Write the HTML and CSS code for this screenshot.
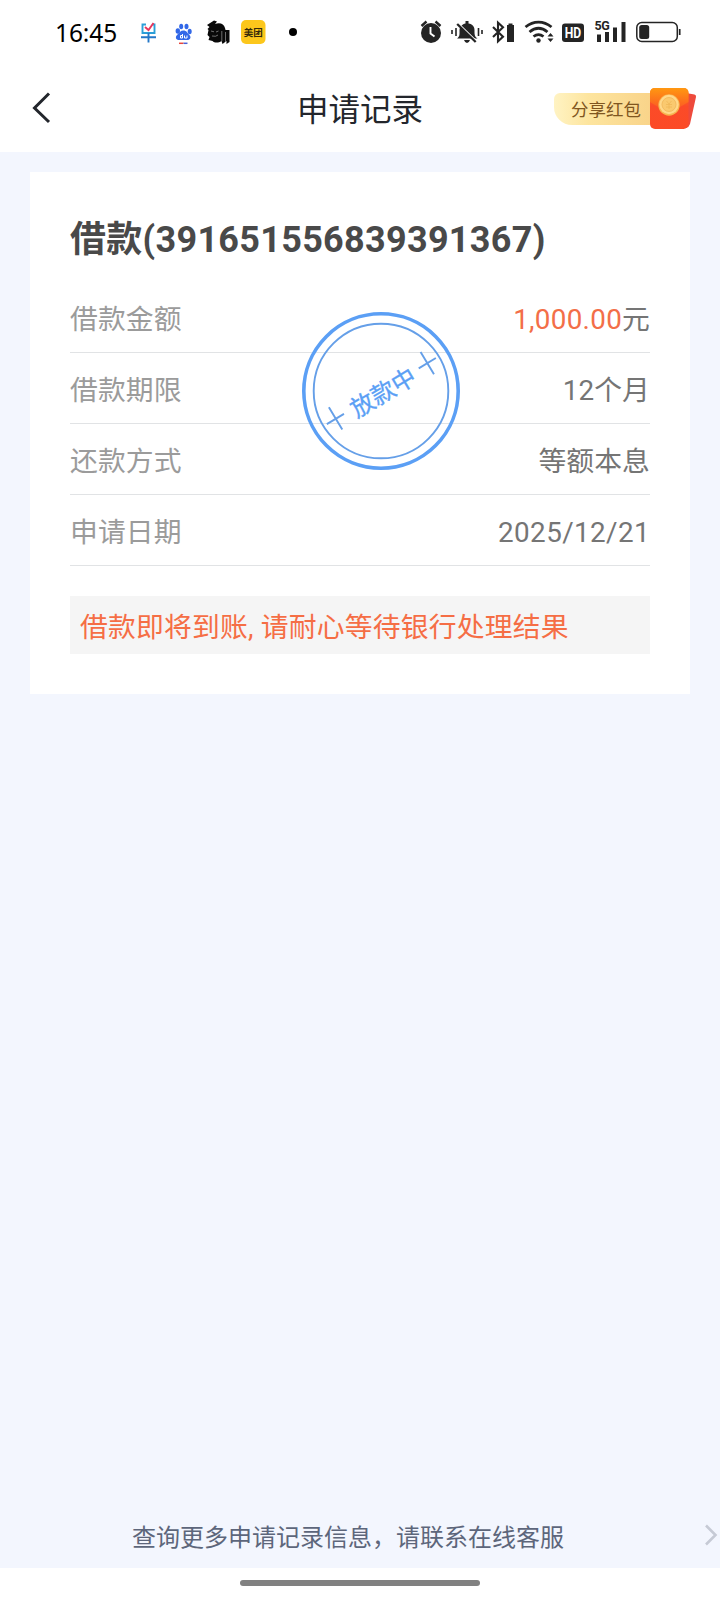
FILE: index.html
```html
<!DOCTYPE html>
<html lang="zh-CN">
<head>
<meta charset="utf-8">
<title>申请记录</title>
<link rel="stylesheet" href="styles.css">
</head>
<body>
<div class="screen">
  <div class="status">
    <span class="clock">16:45</span>
    <svg class="apps" width="170" height="64" viewBox="130 0 170 64">
      <g fill="none" stroke-width="1.900">
        <path d="M146 24.500h-3.500v8.500h12v-8.500h-2" stroke="#2b9fd8"/>
        <path d="M141 37.300h15M148.500 33v9.500" stroke="#2478c8"/>
        <path d="M145 27l3.500 3 5-7" stroke="#e8365d"/>
      </g>
      <g fill="#3268e8">
        <ellipse cx="177.800" cy="31" rx="2.200" ry="2.800"/><ellipse cx="181.200" cy="26.500" rx="2" ry="2.800"/>
        <ellipse cx="186.500" cy="26.500" rx="2" ry="2.800"/><ellipse cx="189.700" cy="31.500" rx="2" ry="2.800"/>
        <path d="M183.500 30.500c3 0 3.500 2.300 5.500 4 3 2.800 1 5.700-2 5.500h-7c-4 .5-5.500-3-2.500-5.500 2-2 3-4 6-4z"/>
      </g>
      <path d="M182.500 34v4h-2v-2.500h2M184.500 35.500v2.500h2.500v-2.500" fill="none" stroke="#fff"/>
      <path d="M179 43.300h4.500" stroke="#e8463c" stroke-width="1.500"/><path d="M183.500 43.300h4" stroke="#4a62d8" stroke-width="1.500"/>
      <path d="M207 25l7-4.500 3 1-2 2.500c5-2 9 0 10 4l.5 2h4v12l-3 2v-3l-4 3-1-3c-3 2-7 2-9 0l-4-1 1-3-2-2 1-5-1-1 2-2z" fill="#090909"/>
      <path d="M211 31l3 .8M216 32l2.500-1M212 36q4 1 6-1M221.800 31v10M225.500 32v10" stroke="#999" stroke-width=".7" fill="none"/>
      <rect x="241" y="20" width="24.500" height="24" rx="5" fill="#fcc71c"/>
      <text x="253.200" y="35.600" class="meituan">美团</text>
      <circle cx="293" cy="32" r="4" fill="#000"/>
    </svg>
    <svg class="signals" width="270" height="64" viewBox="415 0 270 64">
      <g fill="#242424">
        <circle cx="431" cy="33" r="10"/>
        <path d="M421.500 26l5-4.500M435.500 21.500l5 4.500" stroke="#242424" stroke-width="2.400"/>
        <path d="M430.500 27v6.500l4 3" fill="none" stroke="#fff" stroke-width="1.900"/>
        <path d="M457 38.500c3-2 2.500-5 2.500-8 0-4 3-6.500 6-7V21h3v2.500c4 .5 6 3 6 7s0 6 3 8zM464 40h6q-1 3-3 3t-3-3z"/>
        <path d="M458.500 24l18.500 18" stroke="#fff" stroke-width="2"/>
        <path d="M458 23l18.500 18" transform="translate(-.8 1)" stroke="#242424" stroke-width="2.300"/>
        <path d="M452 30v4M456 28v8M478.500 28v8M482 30v4" stroke="#242424" stroke-width="1.600"/>
      </g>
      <path d="M493 27l10 9.700-5 4.600V22.700l5 4.600-10 9.700" fill="none" stroke="#242424" stroke-width="2.100"/>
      <path d="M508.500 23.500h4v1.500h1.500v17h-7V25h1.500z" fill="#242424"/>
      <g fill="none" stroke="#242424" stroke-width="2.800">
        <path d="M525.500 27c8-6.500 18-6.500 26 0M529.500 32c6-5 12-5 18 0M533.500 36.500c3.500-2.700 6.500-2.700 10 0"/>
      </g>
      <circle cx="538.500" cy="40.500" r="2.200" fill="#242424"/>
      <path d="M547.500 36.500l3-3.500 3 3.500zM547.500 38.500h6l-3 3.500z" fill="#242424"/>
      <rect x="562" y="23.500" width="22" height="18.500" rx="3" fill="#242424"/>
      <text x="573" y="38" class="hd" textLength="16.500" lengthAdjust="spacingAndGlyphs">HD</text>
      <text x="594.500" y="30.300" class="net">5G</text>
      <path d="M597 34.500h4V42h-4zM605 32h4v10h-4zM613 27.500h4V42h-4zM621.500 22h4v20h-4z" fill="#242424"/>
      <rect x="636.800" y="22.600" width="40.500" height="18.800" rx="5" fill="none" stroke="#242424" stroke-width="1.500"/>
      <rect x="639.200" y="25" width="10" height="14" rx="2.500" fill="#242424"/>
      <path d="M679.700 29v6" stroke="#242424" stroke-width="1.700"/>
    </svg>
  </div>

  <header class="nav">
    <svg class="back" width="24" height="36" viewBox="0 0 24 36"><path d="M18 3.500L3.500 18l14.500 14" fill="none" stroke="#23262c" stroke-width="3"/></svg>
    <h1 class="title">申请记录</h1>
    <div class="share">
      <span class="share-label">分享红包</span>
      <svg class="packet" width="48" height="44" viewBox="0 0 48 44">
        <defs>
          <linearGradient id="front" x2="0" y2="1"><stop stop-color="#ff7a1e"/><stop offset=".45" stop-color="#fb4b28"/><stop offset="1" stop-color="#fc4a26"/></linearGradient>
          <linearGradient id="flap" x2="0" y2="1"><stop stop-color="#ff9811"/><stop offset="1" stop-color="#fb5026"/></linearGradient>
        </defs>
        <path d="M36 6l8.500 1.500q2 .5 1.500 2.500l-6 27q-.8 3-4 4z" fill="#ee4a3c"/>
        <rect y="1" width="38.500" height="41" rx="5" fill="url(#front)"/>
        <path d="M0 15V6q0-5 5-5h28.500q5 0 5 5v9L24 23.500q-5 2.500-10 0z" fill="url(#flap)"/>
        <circle cx="19" cy="18" r="10.700" fill="#f6b550"/><circle cx="19" cy="17.500" r="9.700" fill="#ffd88a"/>
        <circle cx="19" cy="17.500" r="7" fill="#fac96f" stroke="#f3bb60"/>
        <path d="M16.500 14l2.500 3 2.500-3M16 17.500h6M16 20h6M19 17v5" fill="none" stroke="#f0b759" stroke-width=".8"/>
      </svg>
    </div>
  </header>

  <main class="content">
    <section class="card">
      <h2 class="loan">借款(391651556839391367)</h2>
      <dl class="rows">
        <div class="row"><dt>借款金额</dt><dd><span class="amount">1,000.00</span>元</dd></div>
        <div class="row"><dt>借款期限</dt><dd>12个月</dd></div>
        <div class="row"><dt>还款方式</dt><dd>等额本息</dd></div>
        <div class="row"><dt>申请日期</dt><dd class="date">2025/12/21</dd></div>
      </dl>
      <p class="notice">借款即将到账, 请耐心等待银行处理结果</p>
      <svg class="stamp" width="160" height="160" viewBox="-80 -80 160 160">
        <circle r="77.200" fill="none" stroke="#5b9ff5" stroke-width="3.600"/>
        <circle r="67.300" fill="none" stroke="#659fe8" stroke-width="1.900"/>
        <g transform="rotate(-31)">
          <text x="1" y="11" class="stamp-text">放款中</text>
          <path d="M-63.500 0.500h20M-53-13v26M44 0h20M54-13v26" stroke="#659fe8" stroke-width="1.900"/>
        </g>
      </svg>
    </section>
    <footer class="service">
      <span class="service-text">查询更多申请记录信息，请联系在线客服</span>
      <svg class="more" width="14" height="24" viewBox="0 0 14 24"><path d="M2 1.500L11.500 11 2 20.500" fill="none" stroke="#c6cad5" stroke-width="2.600"/></svg>
    </footer>
  </main>
  <div class="home"><div class="home-bar"></div></div>
</div>
</body>
</html>
```
FILE: styles.css
```css
* { box-sizing: border-box; margin: 0; padding: 0; }
body { background: #fff; font-family: Roboto, "Noto Sans CJK SC", sans-serif; }
svg { display: block; flex: none; }
.screen { width: 720px; height: 1600px; display: flex; flex-direction: column; overflow: hidden; }
.status { height: 64px; display: flex; align-items: center; padding-left: 55px; }
.clock { width: 75px; padding-top: 1px; font: 24.500px/64px "Noto Sans", sans-serif; letter-spacing: -.1px; color: #000; }
.signals { margin-left: 115px; }
.meituan { font: bold 9.500px "Noto Sans CJK SC", sans-serif; text-anchor: middle; fill: #35290a; }
.hd { font: bold 14px Roboto, sans-serif; text-anchor: middle; fill: #fff; }
.net { font: bold 12.500px Roboto, sans-serif; letter-spacing: -.5px; fill: #242424; }
.nav { height: 88px; display: grid; grid-template-columns: 190px 1fr 190px; align-items: center; }
.back { margin-left: 31px; }
.title { padding-top: 5px; font-size: 31.500px; font-weight: 400; line-height: 44px; text-align: center; color: #23262c; }
.share { display: flex; align-items: center; padding: 2px 0 0 24px; }
.share-label { width: 96px; height: 32px; padding-left: 17px; border-radius: 6px 0 0 18px; background: linear-gradient(90deg, #fff3c3, #fde59f 35%, #f9d48a); color: #80561f; font-size: 17.500px; line-height: 34px; white-space: nowrap; }
.content { flex: 1; display: flex; flex-direction: column; justify-content: space-between; padding-top: 20px; background: #f3f6fe; }
.card { position: relative; height: 522px; margin: 0 30px; padding: 42px 40px 40px; background: #fff; }
.loan { font-size: 36px; line-height: 52px; font-weight: 700; letter-spacing: .3px; color: #494949; white-space: nowrap; }
.rows { padding-top: 16px; }
.row { height: 71px; padding-top: 9px; display: flex; justify-content: space-between; border-bottom: 1px solid #e1e3e5; font-size: 27.800px; line-height: 57px; letter-spacing: .1px; color: #757575; }
.row dt { color: #9b9b9b; }
.amount { color: #f36e48; letter-spacing: .3px; }
.row .date { letter-spacing: .4px; }
.notice { height: 58px; margin-top: 30px; padding-left: 10px; background: #f5f5f5; color: #f56e45; font-size: 27.800px; letter-spacing: .2px; line-height: 63px; white-space: nowrap; }
.stamp { position: absolute; left: 271px; top: 139px; }
.service { height: 64px; display: flex; align-items: center; justify-content: space-between; padding: 0 2px 0 132px; }
.service-text { padding-top: 3px; font-size: 24px; line-height: 36px; color: #5d667b; }
.stamp-text { font: 400 24px "Noto Sans CJK SC", sans-serif; text-anchor: middle; fill: #5b9ff5; stroke: #5b9ff5; stroke-width: .3px; }
.home { height: 32px; padding-top: 12px; background: #fff; }
.home-bar { width: 240px; height: 6px; margin: 0 auto; border-radius: 3px; background: #818181; }
```
